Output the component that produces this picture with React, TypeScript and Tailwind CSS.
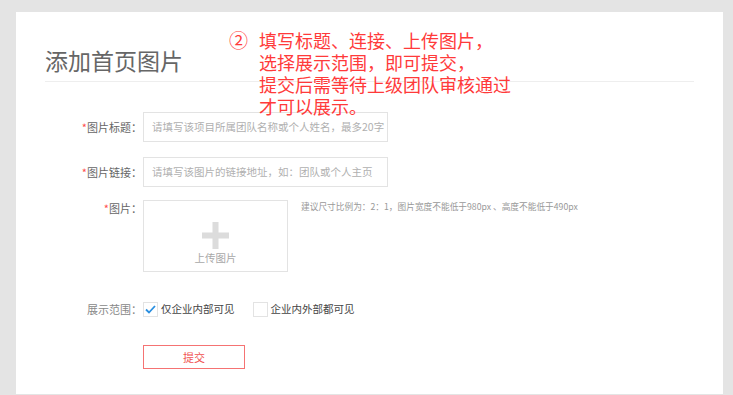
import React from 'react';

const font = { fontFamily: '"Noto Sans CJK SC", "Noto Sans", sans-serif' };

const notes = [
  '填写标题、连接、上传图片，',
  '选择展示范围，即可提交，',
  '提交后需等待上级团队审核通过',
  '才可以展示。',
];

const Label = ({ text }: { text: string }) => (
  <div className="w-[98px] shrink-0 text-right text-[11px] leading-[30px] text-[#666] pr-[1px]">
    <span className="text-[#ff4d4d]">*</span>
    {text}
  </div>
);

const App = () => {
  return (
    <div className="w-[733px] h-[395px] bg-[#e4e4e4] pt-[12px] pl-[16px] pr-[10px] overflow-hidden" style={font}>
      <div className="relative h-[382px] bg-white px-[29px] pt-[31px]">
        {/* Header */}
        <h1 className="text-[23px] leading-[34px] text-[#666] font-normal">添加首页图片</h1>
        <div className="mt-[4px] h-px w-[649px] bg-[#eeeeee]" />

        {/* Annotation */}
        <div className="absolute left-[213px] top-[17px] flex gap-[11px] text-[#ff3a3a] text-[18px] leading-[22px]">
          <span className="text-[19px]">②</span>
          <div>
            {notes.map((n, i) => (
              <div key={i}>{n}</div>
            ))}
          </div>
        </div>

        {/* Form */}
        <div className="mt-[30px] flex flex-col gap-[15px]">
          <div className="flex">
            <Label text="图片标题：" />
            <div className="w-[245px] h-[30px] border border-[#e3e3e3] px-[8px] text-[10.5px] leading-[28px] text-[#b0b0b0] whitespace-nowrap overflow-hidden">
              请填写该项目所属团队名称或个人姓名，最多20字
            </div>
          </div>
          <div className="flex">
            <Label text="图片链接：" />
            <div className="w-[245px] h-[30px] border border-[#e3e3e3] px-[8px] text-[10.5px] leading-[28px] text-[#b0b0b0] whitespace-nowrap overflow-hidden">
              请填写该图片的链接地址，如：团队或个人主页
            </div>
          </div>
          <div className="flex -mt-[2px]">
            <div className="w-[98px] shrink-0 text-right text-[11px] leading-[16px] text-[#666] pr-[1px]">
              <span className="text-[#ff4d4d]">*</span>图片：
            </div>
            <div className="w-[145px] h-[72px] border border-[#e3e3e3] flex flex-col items-center pt-[21px]">
              <svg width="27" height="27" viewBox="0 0 27 27">
                <rect x="10.5" y="0" width="6" height="27" fill="#dcdcdc" />
                <rect x="0" y="10.5" width="27" height="6" fill="#dcdcdc" />
              </svg>
              <div className="mt-[2px] text-[10.5px] leading-[14px] text-[#a8a8a8]">上传图片</div>
            </div>
            <div className="ml-[13px] text-[8.7px] leading-[14px] text-[#999] whitespace-nowrap">
              建议尺寸比例为：2：1，图片宽度不能低于980px 、高度不能低于490px
            </div>
          </div>
        </div>

        <div className="mt-[29px] flex items-center h-[16px]">
          <div className="w-[98px] shrink-0 text-right text-[11px] text-[#888] pr-[1px]">展示范围：</div>
          <label className="flex items-center gap-[3px]">
            <span className="w-[15px] h-[15px] border border-[#e3e3e3] flex items-center justify-center">
              <svg width="11" height="9" viewBox="0 0 11 9">
                <path d="M1 4.5 L4 7.5 L10 1" fill="none" stroke="#2a8fe0" strokeWidth="1.8" />
              </svg>
            </span>
            <span className="text-[10.5px] text-[#444]">仅企业内部可见</span>
          </label>
          <label className="ml-[18px] flex items-center gap-[3px]">
            <span className="w-[15px] h-[15px] border border-[#e3e3e3]" />
            <span className="text-[10.5px] text-[#444]">企业内外部都可见</span>
          </label>
        </div>

        <div className="mt-[28px] flex">
          <div className="w-[98px] shrink-0" />
          <button className="w-[102px] h-[24px] border border-[#f57373] text-[#f05050] text-[11px] leading-[22px]">
            提交
          </button>
        </div>
      </div>
    </div>
  );
};

export default App;
